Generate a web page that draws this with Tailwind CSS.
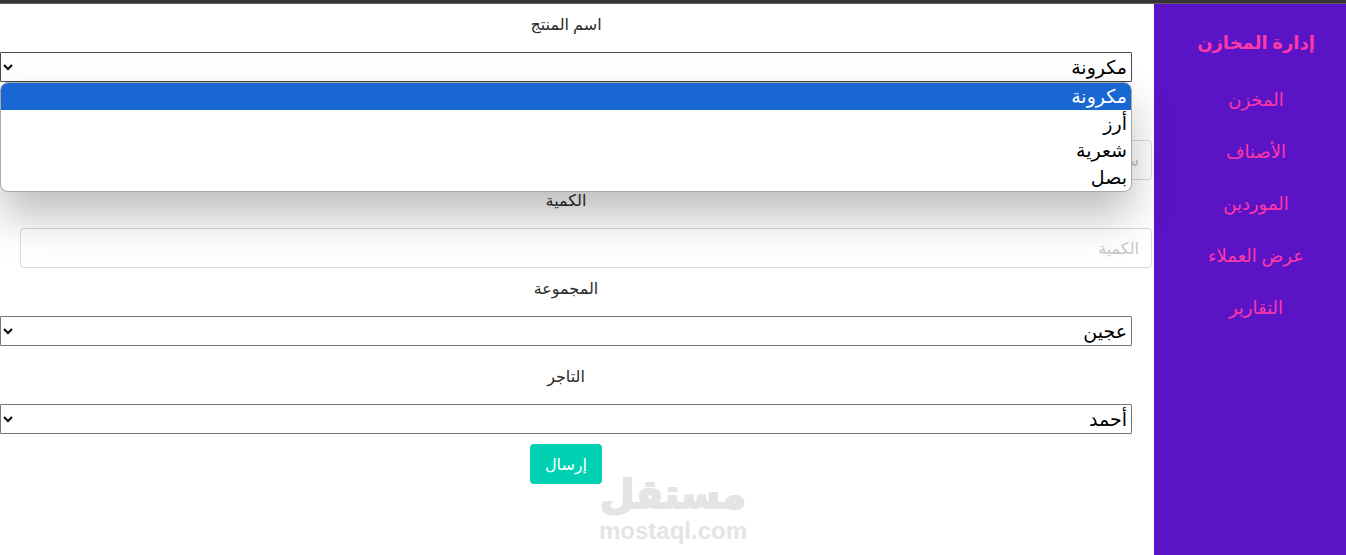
<!DOCTYPE html>
<html lang="ar" dir="rtl">
<head>
    <meta charset="UTF-8">
    <meta name="viewport" content="width=device-width, initial-scale=1.0">
    <title>إدارة المخازن</title>
    <script src="https://cdn.jsdelivr.net/npm/@tailwindcss/browser@4"></script>
</head>
<body class="relative min-h-screen flex flex-col bg-white overflow-x-hidden font-['Noto_Sans','DejaVu_Sans',sans-serif]">

    <!-- Top Line -->
    <div class="h-1 bg-[#353535] border-b border-[#5c5c5c]"></div>

    <div class="flex flex-1">

        <!-- Sidebar -->
        <aside class="w-48 shrink-0 bg-[#5b14c5] text-[#ff38a8] text-center pt-5 pl-3">
            <h1 class="text-lg leading-9 font-bold">إدارة المخازن</h1>
            <nav class="mt-[13px] flex flex-col text-lg">
                <a href="#" class="h-13 leading-[52px]">المخزن</a>
                <a href="#" class="h-13 leading-[52px]">الأصناف</a>
                <a href="#" class="h-13 leading-[52px]">الموردين</a>
                <a href="#" class="h-13 leading-[52px]">عرض العملاء</a>
                <a href="#" class="h-13 leading-[52px]">التقارير</a>
            </nav>
        </aside>

        <!-- Product Form -->
        <main class="flex-1 min-w-0">
            <form class="flex flex-col pt-2">
                <div class="mb-2">
                    <label for="product" class="block mr-[22px] mb-4 text-center leading-6 font-medium text-[#2b2b2b]">اسم المنتج</label>
                    <div class="relative mr-[22px] h-10">
                        <select id="product" class="block w-full h-[30px] border border-[#4a4a4a] rounded-[1px] bg-white text-[19px] text-black">
                            <option>مكرونة</option>
                            <option>أرز</option>
                            <option>شعرية</option>
                            <option>بصل</option>
                        </select>
                        <!-- Open list -->
                        <ul class="absolute z-10 top-[30px] inset-x-0 border border-[#a8a8a8] rounded-lg overflow-hidden bg-white text-[19px] leading-[27px] text-black shadow-[0_24px_44px_rgba(0,0,0,0.26)]">
                            <li class="h-[27px] px-1 bg-[#1967d2] text-white">مكرونة</li>
                            <li class="h-[27px] px-1">أرز</li>
                            <li class="h-[27px] px-1">شعرية</li>
                            <li class="h-[27px] px-1">بصل</li>
                        </ul>
                    </div>
                </div>

                <div class="mb-2">
                    <label for="price" class="block mr-[22px] mb-4 text-center leading-6 font-medium text-[#2b2b2b]">السعر</label>
                    <div class="mr-0.5 ml-5">
                        <input id="price" type="text" placeholder="سعر المنتج" class="block w-full h-10 px-3 border border-[#dbdbdb] rounded bg-white placeholder:text-[#c8c8c8]">
                    </div>
                </div>

                <div class="mb-2">
                    <label for="quantity" class="block mr-[22px] mb-4 text-center leading-6 font-medium text-[#2b2b2b]">الكمية</label>
                    <div class="mr-0.5 ml-5">
                        <input id="quantity" type="text" placeholder="الكمية" class="block w-full h-10 px-3 border border-[#dbdbdb] rounded bg-white placeholder:text-[#c8c8c8]">
                    </div>
                </div>

                <div class="mb-2">
                    <label for="group" class="block mr-[22px] mb-4 text-center leading-6 font-medium text-[#2b2b2b]">المجموعة</label>
                    <div class="mr-[22px] h-10">
                        <select id="group" class="block w-full h-[30px] border border-[#767676] rounded-[1px] bg-white text-[19px] text-black">
                            <option>عجين</option>
                        </select>
                    </div>
                </div>

                <div>
                    <label for="trader" class="block mr-[22px] mb-4 text-center leading-6 font-medium text-[#2b2b2b]">التاجر</label>
                    <div class="mr-[22px] h-10">
                        <select id="trader" class="block w-full h-[30px] border border-[#767676] rounded-[1px] bg-white text-[19px] text-black">
                            <option>أحمد</option>
                        </select>
                    </div>
                </div>

                <div class="mr-[22px] text-center">
                    <button type="submit" class="h-10 w-[72px] rounded bg-[#00d1b2] text-white">إرسال</button>
                </div>
            </form>
        </main>
    </div>

    <!-- Watermark -->
    <div class="absolute bottom-2.5 left-1/2 -translate-x-1/2 text-center font-bold text-[#e4e4e4] pointer-events-none">
        <div class="text-[40px] leading-12 [-webkit-text-stroke:2px_#e4e4e4]">مستقل</div>
        <div dir="ltr" class="text-2xl leading-7 font-['Liberation_Sans',sans-serif]">mostaql.com</div>
    </div>
</body>
</html>
